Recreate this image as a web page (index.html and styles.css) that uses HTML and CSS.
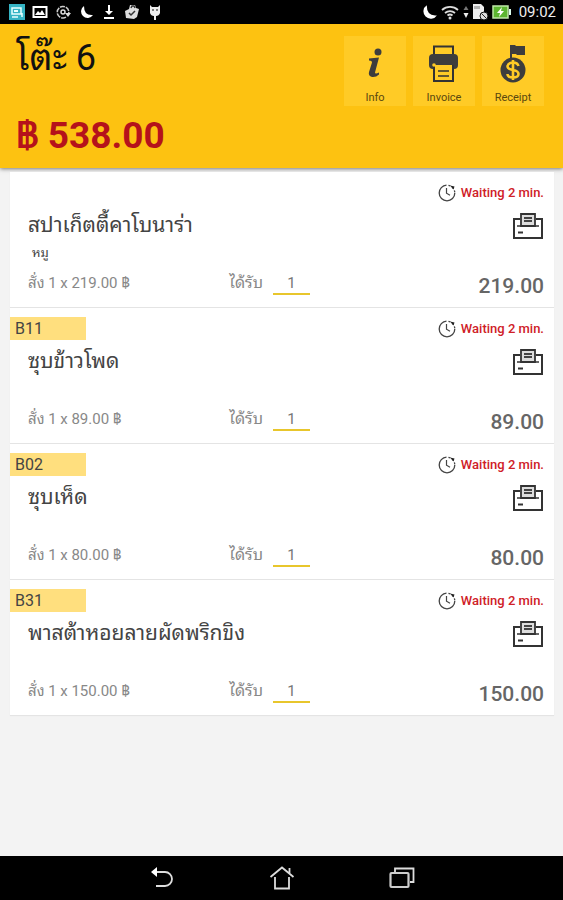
FILE: index.html
```html
<!DOCTYPE html>
<html lang="th">
  <head>
    <meta charset="UTF-8" />
    <meta name="viewport" content="width=device-width, initial-scale=1.0" />
    <title>โต๊ะ 6</title>
    <link rel="stylesheet" href="styles.css">
  </head>
  <body>
    <svg class="sprite" aria-hidden="true">
      <symbol id="clock" viewBox="0 0 18 18">
        <circle cx="9" cy="9" r="7.8" fill="none" stroke="#444" stroke-width="1.3" stroke-dasharray="36 2 2 2 2 2 2 1"/>
        <path d="M8.500 4v5.200l3.500 2" fill="none" stroke="#444" stroke-width="1.200"/>
        <path d="M12 1.500l4.500 1-1 3z" fill="#222"/>
      </symbol>
      <symbol id="moon" viewBox="0 0 16 16">
        <path d="M6 2a6.500 6.500 0 1 0 9 9Q6 12 6 2z" fill="#fff"/>
      </symbol>
      <symbol id="print" viewBox="0 0 32 28">
        <path d="M8 7H2v19h28V7h-6" fill="none" stroke="#333" stroke-width="2"/>
        <path d="M5 14h22" stroke="#333" stroke-width="1.500"/>
        <path d="M9 14V2h14v12z" fill="#ddd" stroke="#333" stroke-width="1.800"/>
        <path d="M12 6h8M12 9h8" stroke="#444" stroke-width="1.800"/>
        <path d="M6 20.500h5" stroke="#333" stroke-width="2"/>
      </symbol>
    </svg>

    <div class="status-bar">
      <div class="status-icons">
        <svg width="16" height="16" viewBox="0 0 16 16"><path fill="#35b4c4" d="M0 0h16v16H0z"/><path d="M3 4h9v6H3zM3 13h6M13 9v4" fill="none" stroke="#e8ffff" stroke-width="1.500"/><path d="M5 6h4v2H5z" fill="#e8ffff"/></svg>
        <svg width="16" height="16" viewBox="0 0 16 16"><path d="M1.500 3h13v10h-13z" fill="none" stroke="#fff" stroke-width="2"/><path d="M3 11l3-4 2 2 2-3 3 5z" fill="#fff"/></svg>
        <svg width="16" height="16" viewBox="0 0 16 16"><path d="M11 13.200A5.800 5.800 0 1 1 13.800 9" fill="none" stroke="#ccc" stroke-width="1.500" stroke-dasharray="5 1"/><circle cx="8" cy="8" r="2" fill="none" stroke="#ddd" stroke-width="1.500"/><path d="M10 9h6l-3 4z" fill="#ddd"/></svg>
        <svg width="16" height="16"><use href="#moon"/></svg>
        <svg width="16" height="16" viewBox="0 0 16 16"><path d="M7 1h2v6h3l-4 4-4-4h3zM3 13h10v2H3z" fill="#fff"/></svg>
        <svg width="16" height="16" viewBox="0 0 16 16"><path d="M1 7l4-2 1-4h5l1 3 3 1-2 8-3 2-8-1z" fill="#ddd"/><path d="M7 4l1-2h2l1 2M5 9l2 2 4-4" fill="none" stroke="#333" stroke-width="1.500"/></svg>
        <svg width="16" height="16" viewBox="0 0 16 16"><path d="M3 1l2 2h6l2-2v8q-1 3-4 3v4H7v-4q-3 0-4-3z" fill="#eee"/><path d="M5 6h2M9 6h2" stroke="#111"/></svg>
      </div>
      <div class="status-right">
        <svg width="18" height="18"><use href="#moon"/></svg>
        <svg width="19" height="16" viewBox="0 0 19 16"><path d="M1 6a12 12 0 0 1 16 0M4 9a8 8 0 0 1 10 0M6.500 11.500a4 4 0 0 1 5 0" fill="none" stroke="#ddd" stroke-width="1.800"/><circle cx="9" cy="14" r="1.500" fill="#ddd"/></svg>
        <svg width="6" height="12" viewBox="0 0 6 12"><path d="M3 0l2.500 4h-5z" fill="#777"/><path d="M3 12L.5 7h5z" fill="#eee"/></svg>
        <svg width="17" height="18" viewBox="0 0 17 18"><path d="M1 1h8l3 3v12H1z" fill="#eee"/><path d="M3 3v3M5 3v3M7 3v3" stroke="#777"/><circle cx="12" cy="13" r="4" fill="#ddd" stroke="#111"/><path d="M9.500 10.500l5 5" stroke="#222"/></svg>
        <svg width="20" height="16" viewBox="0 0 20 16"><path d="M1 2h15v12H1z" fill="#5cb531" stroke="#bfe8a8" stroke-width="1.500"/><path d="M17 5h2v6h-2z" fill="#dfe"/><path d="M10 3L5 9h3l-1 4 5-6H9z" fill="#fff"/></svg>
        <span class="time">09:02</span>
      </div>
    </div>

    <header class="header">
      <div class="bill">
        <h1 class="table-name">โต๊ะ 6</h1>
        <p class="total">฿ 538.00</p>
      </div>
      <div class="actions">
        <button class="action-btn">
          <svg width="36" height="40" viewBox="0 0 36 40"><circle cx="21" cy="8" r="3.500" fill="#3d3d3d"/><path d="M12 14.500l10-1-4 15q0 2 4 0v2q-3 3-7 2.500-4-1-3-5l3-9.500q0-2-3-2z" fill="#3d3d3d"/></svg>
          Info
        </button>
        <button class="action-btn">
          <svg width="36" height="40" viewBox="0 0 36 40"><path d="M8 11V2.500h19V11" fill="none" stroke="#333" stroke-width="2"/><rect x="3" y="10" width="29" height="15" rx="4" fill="#3d3d3d"/><path d="M8 20h19v17H8z" fill="#ffcb26" stroke="#333" stroke-width="2"/><path d="M6 16h23v5H6z" fill="#3d3d3d"/><circle cx="8" cy="21" r="1.800" fill="#ffcb26"/><path d="M12 27h11M12 32h11" stroke="#333" stroke-width="1.600"/></svg>
          Invoice
        </button>
        <button class="action-btn">
          <svg width="36" height="40" viewBox="0 0 36 40"><path d="M16 1v14" stroke="#3d3d3d" stroke-width="2"/><path d="M17 1h3l1 1h9v9h-8l-1-1h-4z" fill="#3d3d3d"/><circle cx="18" cy="26" r="12.500" fill="#3d3d3d"/><path d="M23.500 22q-1-3.500-5.500-3.500t-5.500 3.500q0 3 5.500 4t5.500 4q0 3.500-5.500 3.500T12.500 30M18 16v20" fill="none" stroke="#ffcb26" stroke-width="2.600"/></svg>
          Receipt
        </button>
      </div>
    </header>

    <main class="orders">
      <article class="order">
        <div class="order-top">
          <span class="waiting"><svg width="18" height="18"><use href="#clock"/></svg>Waiting 2 min.</span>
        </div>
        <div class="order-body">
          <div>
            <h2 class="order-name">สปาเก็ตตี้คาโบนาร่า</h2>
            <p class="order-note">หมู</p>
          </div>
          <button class="print-btn" aria-label="Print"><svg width="32" height="28"><use href="#print"/></svg></button>
        </div>
        <div class="order-foot">
          <span>สั่ง 1 x 219.00 ฿</span>
          <label class="received">ได้รับ <input type="text" class="qty" value="1"></label>
          <strong class="price">219.00</strong>
        </div>
      </article>

      <article class="order">
        <div class="order-top">
          <span class="code">B11</span>
          <span class="waiting"><svg width="18" height="18"><use href="#clock"/></svg>Waiting 2 min.</span>
        </div>
        <div class="order-body">
          <h2 class="order-name">ซุบข้าวโพด</h2>
          <button class="print-btn" aria-label="Print"><svg width="32" height="28"><use href="#print"/></svg></button>
        </div>
        <div class="order-foot">
          <span>สั่ง 1 x 89.00 ฿</span>
          <label class="received">ได้รับ <input type="text" class="qty" value="1"></label>
          <strong class="price">89.00</strong>
        </div>
      </article>

      <article class="order">
        <div class="order-top">
          <span class="code">B02</span>
          <span class="waiting"><svg width="18" height="18"><use href="#clock"/></svg>Waiting 2 min.</span>
        </div>
        <div class="order-body">
          <h2 class="order-name">ซุบเห็ด</h2>
          <button class="print-btn" aria-label="Print"><svg width="32" height="28"><use href="#print"/></svg></button>
        </div>
        <div class="order-foot">
          <span>สั่ง 1 x 80.00 ฿</span>
          <label class="received">ได้รับ <input type="text" class="qty" value="1"></label>
          <strong class="price">80.00</strong>
        </div>
      </article>

      <article class="order">
        <div class="order-top">
          <span class="code">B31</span>
          <span class="waiting"><svg width="18" height="18"><use href="#clock"/></svg>Waiting 2 min.</span>
        </div>
        <div class="order-body">
          <h2 class="order-name">พาสต้าหอยลายผัดพริกขิง</h2>
          <button class="print-btn" aria-label="Print"><svg width="32" height="28"><use href="#print"/></svg></button>
        </div>
        <div class="order-foot">
          <span>สั่ง 1 x 150.00 ฿</span>
          <label class="received">ได้รับ <input type="text" class="qty" value="1"></label>
          <strong class="price">150.00</strong>
        </div>
      </article>
    </main>

    <nav class="nav-bar">
      <button class="nav-btn" aria-label="Back"><svg width="26" height="26" viewBox="0 0 26 26"><path d="M6 7h10a7 7 0 0 1 0 14H7" fill="none" stroke="#ddd" stroke-width="1.800"/><path d="M2 7l6-5v10z" fill="#fff"/></svg></button>
      <button class="nav-btn" aria-label="Home"><svg width="26" height="26" viewBox="0 0 26 26"><path d="M1.500 12L13 2.500 24.500 12M20.500 8V3M6 12v11.500h14V12" fill="none" stroke="#ddd" stroke-width="1.800"/></svg></button>
      <button class="nav-btn" aria-label="Recent apps"><svg width="26" height="26" viewBox="0 0 26 26"><rect x="1.500" y="8" width="18" height="14" rx="1" fill="none" stroke="#ccc" stroke-width="2.200"/><path d="M6 7V3.500h18.500V17H21" fill="none" stroke="#ddd" stroke-width="1.800"/></svg></button>
    </nav>
  </body>
</html>
```

FILE: styles.css
```css
* {
  margin: 0;
  padding: 0;
  box-sizing: border-box;
}

body {
  font-family: Roboto, "Noto Sans Thai Looped", "Droid Sans Thai", Loma, "Noto Sans Thai", "Noto Sans", sans-serif;
  background: #f3f3f3;
  color: #444;
  min-height: 100vh;
  display: flex;
  flex-direction: column;
}

button {
  font-family: inherit;
  border: none;
  background: none;
  cursor: pointer;
}

svg {
  display: block;
  flex: none;
}

.sprite {
  position: absolute;
  width: 0;
  height: 0;
}

.status-bar {
  display: flex;
  justify-content: space-between;
  align-items: center;
  height: 24px;
  padding: 0 7px 0 9px;
  background: #000;
  color: #eee;
}

.status-icons {
  display: flex;
  gap: 7px;
}

.status-right {
  display: flex;
  align-items: center;
  gap: 3px;
}

.time {
  font-size: 15px;
  margin-left: 4px;
}

.header {
  display: flex;
  justify-content: space-between;
  align-items: flex-start;
  padding: 12px 19px 10px 16px;
  background: #fdc211;
  box-shadow: 0 1px 4px rgba(0,0,0,0.5);
}

.table-name {
  font-size: 36px;
  font-weight: 400;
  line-height: 44px;
  color: #111;
}

.total {
  font-family: Roboto, Loma, sans-serif;
  font-size: 37px;
  font-weight: 700;
  line-height: 44px;
  margin-top: 34px;
  color: #b5121b;
}

.actions {
  display: flex;
  gap: 7px;
}

.action-btn {
  display: flex;
  flex-direction: column;
  align-items: center;
  justify-content: space-between;
  width: 62px;
  height: 70px;
  padding: 8px 0 2px;
  background: #ffcb26;
  font-size: 11px;
  line-height: 12px;
  color: #5a480f;
}

.orders {
  flex: 1;
  display: flex;
  flex-direction: column;
  gap: 1px;
  padding: 4px 9px 16px 10px;
}

.order {
  min-height: 135px;
  display: flex;
  flex-direction: column;
  background: #fff;
  box-shadow: 0 1px 1px rgba(0,0,0,0.06);
}

.order-top {
  display: flex;
  align-items: center;
  height: 32px;
  padding: 9px 10px 0 0;
}

.code {
  width: 76px;
  padding-left: 5px;
  background: #ffdf7e;
  font-size: 16px;
  line-height: 23px;
}

.waiting {
  display: flex;
  align-items: center;
  gap: 5px;
  margin-left: auto;
  font-size: 13px;
  font-weight: 500;
  color: #cf2027;
}

.order-body {
  flex: 1;
  display: flex;
  justify-content: space-between;
  align-items: flex-start;
  padding: 8px 10px 0 18px;
}

.order-name {
  font-size: 21px;
  font-weight: 400;
  line-height: 26px;
}

.order-note {
  font-size: 13px;
  line-height: 20px;
  padding: 5px 0 0 4px;
}

.order-foot {
  display: grid;
  grid-template-columns: 39% 1fr auto;
  align-items: start;
  padding: 0 10px 8px 18px;
  font-size: 15px;
  line-height: 20px;
  color: #888;
}

.received {
  display: flex;
  gap: 10px;
  font-size: 16px;
}

.qty {
  width: 37px;
  height: 22px;
  border: none;
  border-bottom: 2px solid #e8c62c;
  background: none;
  font: inherit;
  font-size: 15px;
  color: #777;
  text-align: center;
  outline: none;
}

.price {
  font-size: 21px;
  font-weight: 500;
  line-height: 26px;
  color: #666;
}

.nav-bar {
  display: flex;
  justify-content: center;
  align-items: center;
  gap: 94px;
  height: 44px;
  background: #000;
}
```
